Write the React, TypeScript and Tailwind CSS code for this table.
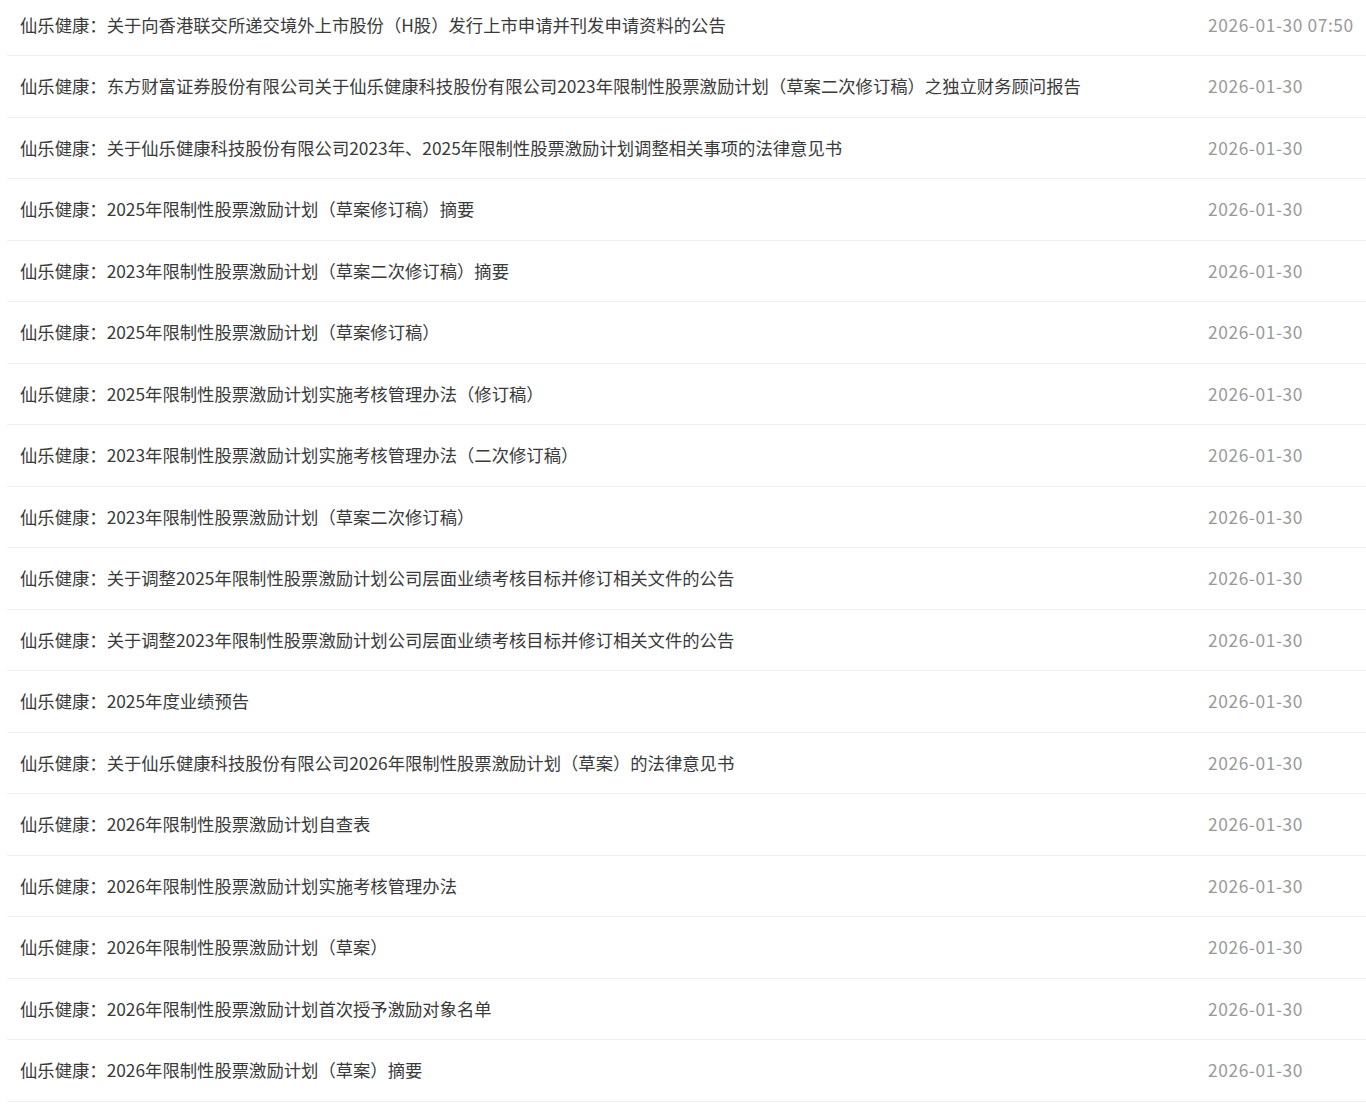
import React from "react";

const items: { title: string; date: string }[] = [
  { title: "仙乐健康：关于向香港联交所递交境外上市股份（H股）发行上市申请并刊发申请资料的公告", date: "2026-01-30 07:50" },
  { title: "仙乐健康：东方财富证券股份有限公司关于仙乐健康科技股份有限公司2023年限制性股票激励计划（草案二次修订稿）之独立财务顾问报告", date: "2026-01-30" },
  { title: "仙乐健康：关于仙乐健康科技股份有限公司2023年、2025年限制性股票激励计划调整相关事项的法律意见书", date: "2026-01-30" },
  { title: "仙乐健康：2025年限制性股票激励计划（草案修订稿）摘要", date: "2026-01-30" },
  { title: "仙乐健康：2023年限制性股票激励计划（草案二次修订稿）摘要", date: "2026-01-30" },
  { title: "仙乐健康：2025年限制性股票激励计划（草案修订稿）", date: "2026-01-30" },
  { title: "仙乐健康：2025年限制性股票激励计划实施考核管理办法（修订稿）", date: "2026-01-30" },
  { title: "仙乐健康：2023年限制性股票激励计划实施考核管理办法（二次修订稿）", date: "2026-01-30" },
  { title: "仙乐健康：2023年限制性股票激励计划（草案二次修订稿）", date: "2026-01-30" },
  { title: "仙乐健康：关于调整2025年限制性股票激励计划公司层面业绩考核目标并修订相关文件的公告", date: "2026-01-30" },
  { title: "仙乐健康：关于调整2023年限制性股票激励计划公司层面业绩考核目标并修订相关文件的公告", date: "2026-01-30" },
  { title: "仙乐健康：2025年度业绩预告", date: "2026-01-30" },
  { title: "仙乐健康：关于仙乐健康科技股份有限公司2026年限制性股票激励计划（草案）的法律意见书", date: "2026-01-30" },
  { title: "仙乐健康：2026年限制性股票激励计划自查表", date: "2026-01-30" },
  { title: "仙乐健康：2026年限制性股票激励计划实施考核管理办法", date: "2026-01-30" },
  { title: "仙乐健康：2026年限制性股票激励计划（草案）", date: "2026-01-30" },
  { title: "仙乐健康：2026年限制性股票激励计划首次授予激励对象名单", date: "2026-01-30" },
  { title: "仙乐健康：2026年限制性股票激励计划（草案）摘要", date: "2026-01-30" },
];

export default function App() {
  return (
    <div
      className="w-[1366px] h-[1110px] overflow-hidden bg-white"
      style={{ fontFamily: '"Noto Sans CJK SC", "Noto Sans", sans-serif' }}
    >
      <ul className="ml-[7px] -mt-[5.5px]">
        {items.map((it, i) => (
          <li
            key={i}
            className="flex items-center h-[61.5px] border-b border-[#eeeff5] box-border"
          >
            <span className="flex-1 pl-[13px] text-[17.33px] text-[#3a3a3a] whitespace-nowrap">
              {it.title}
            </span>
            <span className="w-[158px] text-[17.33px] tracking-[0.6px] text-[#999999] whitespace-nowrap">
              {it.date}
            </span>
          </li>
        ))}
      </ul>
    </div>
  );
}
